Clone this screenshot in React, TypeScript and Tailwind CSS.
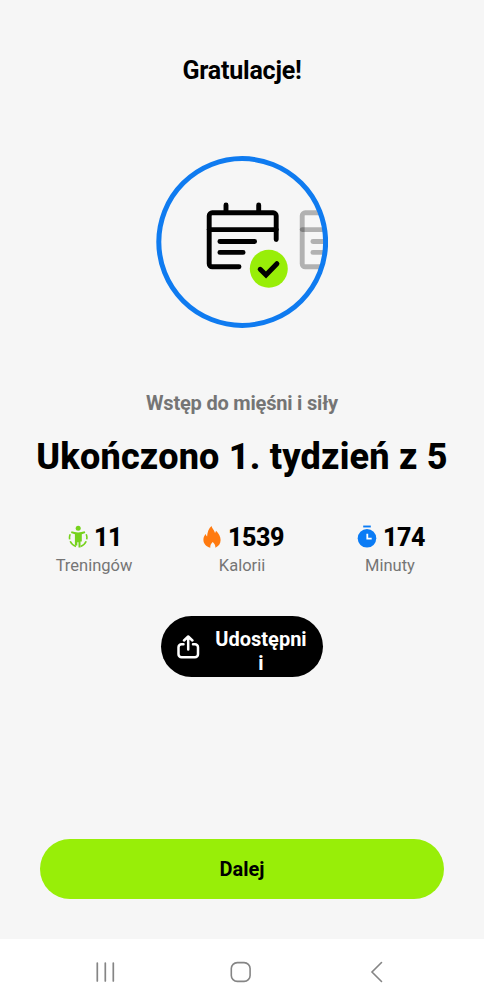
import React from 'react';

const TrainingIcon = () => (
  <svg viewBox="0 0 20 24" className="w-5 h-6" fill="none">
    <circle cx="10.200" cy="3.300" r="2.500" fill="#76d21c" />
    <path d="M3.500 6.300c4.200 1.500 9 1.500 13.200 0l.6 1.700-3.500 1.300v7.200h-1.300v6h-2v-5.200H9.300v3.200H6.900V9.300L3 8z" fill="#76d21c" />
    <path d="M2.200 9.200c-.8 1.800-.9 3.400-.5 5.200M2.200 16.300c1.200 2.700 3 4.300 5.800 5.200M18.200 9.200c.8 1.800.9 3.400.5 5.200M18.200 16.300c-1.200 2.700-3 4.300-5.600 5.200" stroke="#76d21c" strokeWidth="1.600" />
  </svg>
);

const FlameIcon = () => (
  <svg viewBox="0 0 20 24" className="w-5 h-6">
    <path d="M9.500 1c.5 2.300 2.800 4 3.500 7 .5-.6.8-1.300 1-2.200 2.600 2.400 4.600 5.800 4.600 9.200 0 3.600-1.900 6.200-5.200 7.700.1-2.400-.900-4-2.700-5.700-1.600 1.600-2.700 3.300-2.400 5.700-4.300-1.300-6.900-4.200-6.900-8 0-2.300 1-4.100 2.300-5.700.2 1.200.7 2 1.400 2.500C5.300 7.400 6.700 3.200 9.500 1z" fill="#ff7a0f" />
  </svg>
);

const TimerIcon = () => (
  <svg viewBox="0 0 20 24" className="w-5 h-6" fill="none">
    <path d="M6.200 1.500h7.600" stroke="#0a7bf5" strokeWidth="1.900" />
    <circle cx="10" cy="13.300" r="9.300" fill="#0a7bf5" />
    <path d="M10.300 8.700v5h4.400" stroke="#fff" strokeWidth="1.800" />
  </svg>
);

const stats = [
  { icon: <TrainingIcon />, value: '11', label: 'Treningów' },
  { icon: <FlameIcon />, value: '1539', label: 'Kalorii' },
  { icon: <TimerIcon />, value: '174', label: 'Minuty' },
];

const CalendarLines = () => (
  <path d="M276.200 239.500V215.800a3 3 0 0 0-3-3H212.200a3 3 0 0 0-3 3v48a3 3 0 0 0 3 3H239M226 212.800v-7.800M258.700 212.800v-7.800M219.900 241.500h34.700M219.900 252.400h23.200" />
);

const WeekBadge = () => (
  <svg viewBox="156 156 172 172" className="w-[172px] h-[172px]" fill="none">
    <clipPath id="ring">
      <circle cx="242.200" cy="242" r="83.500" />
    </clipPath>
    <g stroke="#000" strokeWidth="4.900" strokeLinecap="round">
      <CalendarLines />
      <path d="M209.200 229.600h67" />
    </g>
    {/* next week, cut off by the ring */}
    <g clipPath="url(#ring)">
      <g transform="translate(93)" stroke="#000" strokeOpacity="0.280" strokeWidth="4.900" strokeLinecap="round">
        <CalendarLines />
        <path d="M209.200 229.600h67" />
      </g>
    </g>
    <circle cx="268.800" cy="268.800" r="19" fill="#98ee08" />
    <path d="M260.200 269.300l5.800 5.700 10.900-11.300" stroke="#000" strokeWidth="5" strokeLinecap="round" />
    <circle cx="242.200" cy="242" r="83.400" stroke="#0f7bf0" strokeWidth="5" />
  </svg>
);

export default function App() {
  return (
    <div className="flex h-[1000px] w-[484px] flex-col bg-[#f6f6f6] font-['Roboto',sans-serif] text-black">
      <main className="flex flex-1 flex-col items-center">
        <h1 className="mt-[55px] h-8 text-[25px] leading-8 font-bold tracking-[-0.2px]">Gratulacje!</h1>

        <div className="mt-[69px]">
          <WeekBadge />
        </div>

        <p className="mt-[63px] text-[20px] leading-6 font-bold tracking-[-0.2px] text-[#757575]">Wstęp do mięśni i siły</p>
        <h2 className="mt-[20px] text-[36px] leading-[44px] font-extrabold tracking-[0.2px] whitespace-nowrap">Ukończono 1. tydzień z 5</h2>

        <div className="mt-[44px] grid w-[444px] grid-cols-3">
          {stats.map((s) => (
            <div key={s.label} className="flex flex-col items-center">
              <div className="flex h-[30px] items-center gap-1.5 pl-0.5">
                <span className="-mt-0.5">{s.icon}</span>
                <span className="text-[25px] leading-[30px] font-extrabold tracking-[-0.4px]">{s.value}</span>
              </div>
              <span className="mt-[3px] text-[16.5px] leading-5 text-[#757575]">{s.label}</span>
            </div>
          ))}
        </div>

        <button className="mt-[40px] flex h-[61px] w-[162px] items-center rounded-full bg-black pl-[15px] text-white">
          <svg viewBox="0 0 24 24" className="h-6 w-6 shrink-0" fill="none" stroke="#fff" strokeWidth="2.500" strokeLinecap="round" strokeLinejoin="round">
            <path d="M7.500 9.300H5.500a3 3 0 0 0-3 3v7a3 3 0 0 0 3 3h13.500a3 3 0 0 0 3-3v-7a3 3 0 0 0-3-3H17M12.200 14.500V2M8 5.500l4.200-4 4.200 4" />
          </svg>
          <span className="ml-[14px] w-[94px] pt-[8px] text-center text-[20px] leading-6 font-bold">
            Udostępni
            <br />i
          </span>
        </button>
      </main>

      <button className="mx-auto mb-[40px] h-[60px] w-[404px] rounded-full bg-[#98ee08] text-[20px] font-bold">Dalej</button>

      {/* system navigation */}
      <nav className="flex h-[61px] items-center bg-white pt-1 pl-[93px] text-[#858585]">
        <svg viewBox="0 0 24 24" className="h-6 w-6" stroke="currentColor" strokeWidth="1.700" strokeLinecap="round">
          <path d="M4.300 3v18M12.300 3v18M20.300 3v18" />
        </svg>
        <svg viewBox="0 0 24 24" className="ml-[112px] h-6 w-6" fill="none" stroke="currentColor" strokeWidth="1.600">
          <rect x="2.300" y="2.600" width="18.800" height="18.800" rx="6" />
        </svg>
        <svg viewBox="0 0 24 24" className="ml-[112px] h-6 w-6" fill="none" stroke="currentColor" strokeWidth="1.600" strokeLinecap="round">
          <path d="M16.500 2.500L7 12l9.500 9.500" />
        </svg>
      </nav>
    </div>
  );
}
